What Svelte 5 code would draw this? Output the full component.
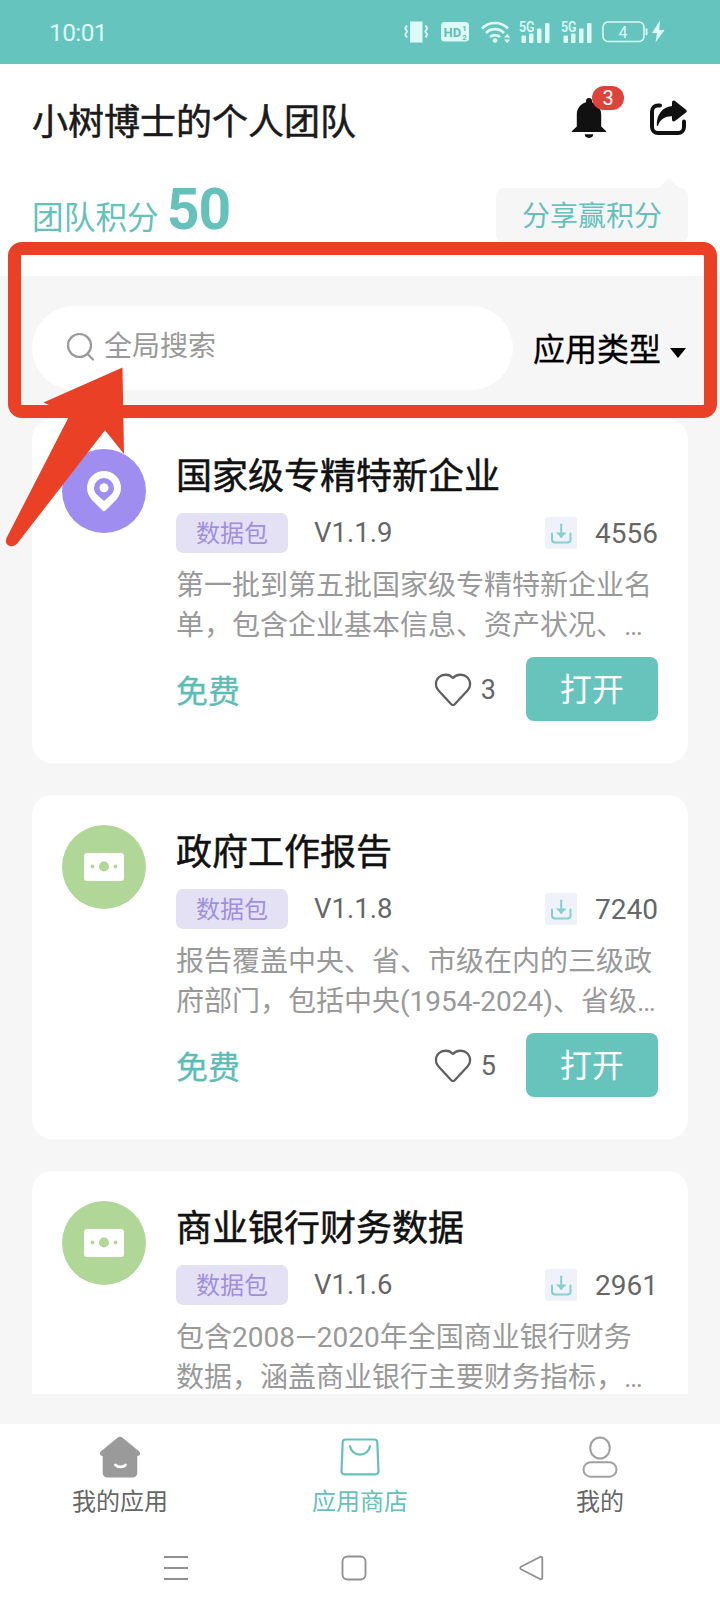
<script lang="ts">
    type App = {
        id: number;
        name: string;
        icon: 'pin' | 'cash';
        version: string;
        downloads: number;
        desc: string[];
        likes?: number;
    };

    let keyword = $state('');

    const apps: App[] = [
        {
            id: 1,
            name: '国家级专精特新企业',
            icon: 'pin',
            version: 'V1.1.9',
            downloads: 4556,
            desc: ['第一批到第五批国家级专精特新企业名', '单，包含企业基本信息、资产状况、…'],
            likes: 3
        },
        {
            id: 2,
            name: '政府工作报告',
            icon: 'cash',
            version: 'V1.1.8',
            downloads: 7240,
            desc: ['报告覆盖中央、省、市级在内的三级政', '府部门，包括中央(1954-2024)、省级…'],
            likes: 5
        },
        {
            id: 3,
            name: '商业银行财务数据',
            icon: 'cash',
            version: 'V1.1.6',
            downloads: 2961,
            desc: ['包含2008—2020年全国商业银行财务', '数据，涵盖商业银行主要财务指标，…']
        }
    ];
</script>

{#snippet signal()}
    <svg width="32" height="24" viewBox="0 0 32 24" fill="currentColor">
        <text x="0" y="11.5" font-size="14" font-weight="600" textLength="15.5" lengthAdjust="spacingAndGlyphs">5G</text>
        <rect x="2.5" y="15.5" width="4.5" height="7.5" rx="1" />
        <rect x="10" y="13.5" width="4.5" height="9.5" rx="1" />
        <rect x="18" y="8.5" width="4.5" height="14.5" rx="1" />
        <rect x="26" y="3" width="4.5" height="20" rx="1" />
    </svg>
{/snippet}

<div class="screen">
    <div class="status-bar">
        <span class="time">10:01</span>
        <div class="status-icons">
            <svg width="24" height="24" viewBox="0 0 24 24" fill="none" stroke="currentColor" stroke-width="1.8">
                <rect x="6" y="1.5" width="12.5" height="21" fill="currentColor" stroke="none" />
                <path d="M3 5.500 1.200 8.500l2 3-2 3 1.800 3M21.500 5.500l1.800 3-2 3 2 3-1.800 3" />
            </svg>
            <svg class="hd" width="28" height="20" viewBox="0 0 28 20">
                <rect width="28" height="19.500" rx="3.500" fill="currentColor" />
                <g fill="#62bdb8" font-weight="700">
                    <text x="2.500" y="14.500" font-size="13">HD</text>
                    <text x="21.200" y="9" font-size="7.500">1</text>
                    <text x="21.200" y="17.500" font-size="7.500">2</text>
                </g>
            </svg>
            <svg class="wifi" width="30" height="24" viewBox="0 0 30 24" fill="none" stroke="currentColor" stroke-width="2.600">
                <path d="M1 8.500a18 18 0 0 1 26 0M5 13a12.500 12.500 0 0 1 18 0M9 17.200a7 7 0 0 1 10 0" />
                <circle cx="14" cy="20.500" r="2.300" fill="currentColor" stroke="none" />
                <path d="M23 17.500l3.200-3.500 3.200 3.500zM23 19.500l3.200 3.500 3.200-3.500z" fill="currentColor" stroke="none" />
            </svg>
            {@render signal()}
            <span class="second-sim">{@render signal()}</span>
            <svg class="battery" width="64" height="26" viewBox="0 0 64 26">
                <rect x="1" y="3" width="41" height="19.500" rx="5" fill="none" stroke="currentColor" stroke-width="1.500" />
                <path d="M44.500 9.500v6.500" stroke="currentColor" stroke-width="2" />
                <text x="16.500" y="18.500" font-size="16" fill="currentColor">4</text>
                <path d="M58 1.500 50 14h5l-1.500 9.500L62.500 11h-5.300z" fill="currentColor" />
            </svg>
        </div>
    </div>

    <header class="header">
        <div class="title-row">
            <h1>小树博士的个人团队</h1>
            <div class="actions">
                <div class="bell">
                    <svg width="36" height="42" viewBox="0 0 36 42" fill="#111">
                        <path d="M18 0a3 3 0 0 0-3 3v1.200C9.500 5.600 5.800 10.500 5.800 16.500V28.500L1 33c-.6.600-.4 1 .4 1h33.200c.8 0 1-.4.400-1l-4.800-4.500V16.500c0-6-3.700-10.900-9.200-12.300V3a3 3 0 0 0-3-3z" />
                        <path d="M13.800 36.300h8.400a4.200 3.600 0 0 1-8.400 0z" />
                    </svg>
                    <span class="badge">3</span>
                </div>
                <svg width="38" height="36" viewBox="0 0 38 36">
                    <path d="M10 5.500H8a6 6 0 0 0-6 6V27a6 6 0 0 0 6 6h20a6 6 0 0 0 6-6v-5.500" fill="none" stroke="#111" stroke-width="4" stroke-linecap="round" />
                    <path d="M25 1 36 9.800c1 .8 1 2 0 2.800L25 21c-1.500 1-3 .2-3-1.500v-3.200c-6.500-.2-11.500 2.400-14 9.200-.4 1-1.200.8-1.200-.2C6.500 15 12 7 22 6V2.500C22 .8 23.500 0 25 1z" fill="#111" />
                </svg>
            </div>
        </div>
        <div class="points-row">
            <div class="points">
                <span>团队积分</span>
                <strong>50</strong>
            </div>
            <div class="share-tip">分享赢积分</div>
        </div>
    </header>

    <div class="search-row">
        <label class="search">
            <svg width="30" height="30" viewBox="0 0 30 30" fill="none" stroke="#999" stroke-width="2.200" stroke-linecap="round">
                <circle cx="13.500" cy="13.500" r="11.500" />
                <path d="M21.500 22l5.500 5.500" />
            </svg>
            <input type="text" placeholder="全局搜索" bind:value={keyword} />
        </label>
        <div class="filter">
            <span>应用类型</span>
            <i class="caret"></i>
        </div>
    </div>

    <main class="list">
        {#each apps as app (app.id)}
            <article class="card">
                <div class="avatar {app.icon}">
                    {#if app.icon === 'pin'}
                        <svg width="36" height="42" viewBox="0 0 36 42" fill="#fff">
                            <path fill-rule="evenodd" d="M18 1A17 17 0 0 0 1 18c0 5 2 8.500 5 12l10.600 10.600c.8.8 2 .8 2.800 0L30 30c3-3.500 5-7 5-12A17 17 0 0 0 18 1zM18 8a10 10 0 0 1 10 10c0 3-1.200 5-3 6.800L18 31l-7-6.200C9.200 23 8 21 8 18A10 10 0 0 1 18 8z" />
                            <circle cx="18" cy="17.700" r="4.500" />
                        </svg>
                    {:else}
                        <svg width="40" height="28" viewBox="0 0 40 28">
                            <rect width="40" height="28" rx="3" fill="#fff" />
                            <g fill="#b1d798">
                                <circle cx="20" cy="13.500" r="5" />
                                <circle cx="8.500" cy="13.500" r="1.900" />
                                <circle cx="31.500" cy="13.500" r="1.900" />
                            </g>
                        </svg>
                    {/if}
                </div>
                <div class="info">
                    <h2>{app.name}</h2>
                    <div class="meta">
                        <span class="tag">数据包</span>
                        <span class="version">{app.version}</span>
                        <span class="downloads">
                            <svg width="32" height="32" viewBox="0 0 32 32" fill="none" stroke="#85cfce" stroke-linecap="round">
                                <rect width="32" height="32" rx="3" fill="#eff2fa" stroke="none" />
                                <path d="M7 16.500v6a3 3 0 0 0 3 3h12.500a3 3 0 0 0 3-3v-6" stroke-width="2" />
                                <path d="M16.200 7.500V20" stroke-width="2" />
                                <path d="M11 15.500l5.200 5.500 5.200-5.500z" fill="#85cfce" stroke="none" />
                            </svg>
                            {app.downloads}
                        </span>
                    </div>
                    <p class="desc">
                        {#each app.desc as line}
                            <span>{line}</span>
                        {/each}
                    </p>
                    {#if app.likes}
                        <div class="bottom">
                            <span class="price">免费</span>
                            <span class="likes">
                                <svg width="38" height="34" viewBox="0 0 38 34" fill="none" stroke="#606060" stroke-width="2.300" stroke-linejoin="round">
                                    <path d="M19 5C15.500 1 8.500.6 4.800 4.300 1 8 1 14 4.500 17.500L17.300 31.300c1 1 2.400 1 3.400 0L33.500 17.500C37 14 37 8 33.200 4.300 29.500.6 22.500 1 19 5z" />
                                </svg>
                                {app.likes}
                            </span>
                            <button type="button">打开</button>
                        </div>
                    {/if}
                </div>
            </article>
        {/each}
    </main>

    <nav class="tab-bar">
        <div class="tab">
            <svg width="42" height="42" viewBox="0 0 42 42">
                <path d="M18.500 1.800 2 15.200c-2.200 2-.8 4.800 1.700 4.800v17a4.500 4.500 0 0 0 4.500 4.500h25.600a4.500 4.500 0 0 0 4.500-4.500V20c2.500 0 3.900-2.800 1.700-4.800L23.500 1.800a4 4 0 0 0-5 0z" fill="#9a9a9a" />
                <path d="M16.500 29c2.500 2.600 7.500 2.600 10 0" fill="none" stroke="#fff" stroke-width="2.800" stroke-linecap="round" />
            </svg>
            <span>我的应用</span>
        </div>
        <div class="tab active">
            <svg width="42" height="42" viewBox="0 0 42 42" fill="none" stroke="#66c1bd" stroke-width="2.200" stroke-linecap="round">
                <path d="M6.500 3.500h29a2.800 2.800 0 0 1 2.800 2.800L39.500 35a3 3 0 0 1-3 3.300h-31a3 3 0 0 1-3-3.300L3.700 6.300a2.800 2.800 0 0 1 2.800-2.800z" />
                <path d="M11 10c1.500 11.500 18.500 11.500 20 0" />
            </svg>
            <span>应用商店</span>
        </div>
        <div class="tab">
            <svg width="42" height="42" viewBox="0 0 42 42" fill="none" stroke="#a0a0a0" stroke-width="2">
                <ellipse cx="21" cy="12" rx="9.800" ry="10.600" />
                <rect x="4.500" y="26.200" width="33" height="14.600" rx="7.300" />
            </svg>
            <span>我的</span>
        </div>
    </nav>

    <div class="system-nav">
        <svg width="26" height="26" viewBox="0 0 26 26" stroke="#909090" stroke-width="2">
            <path d="M1 2h24M1 13h24M1 24h24" />
        </svg>
        <svg width="26" height="26" viewBox="0 0 26 26" fill="none" stroke="#909090" stroke-width="1.800">
            <rect x="1.500" y="1.500" width="23" height="23" rx="5" />
        </svg>
        <svg width="26" height="26" viewBox="0 0 26 26" fill="none" stroke="#909090" stroke-width="1.800" stroke-linejoin="round">
            <path d="M2 11.800 21 2c1.200-.6 2.300 0 2.300 1.200v19.600c0 1.200-1.100 1.800-2.300 1.200L2 14.200c-1-.6-1-1.800 0-2.400z" />
        </svg>
    </div>

    <div class="highlight"></div>
    <svg class="pointer" width="130" height="190" viewBox="0 0 130 190">
        <path d="M122.500 7.500 43.500 42.500 70 54.500 6.500 178c-3 7 6 12 11.500 4.500L105 70.300 124 94z" fill="#ea4025" />
    </svg>
</div>

<style>
    :global(body) {
        margin: 0;
    }

    .screen {
        position: relative;
        display: flex;
        flex-direction: column;
        width: 720px;
        height: 1612px;
        overflow: hidden;
        background: #f6f6f6;
        font-family: Roboto, "Noto Sans CJK SC", sans-serif;
    }

    .screen * {
        box-sizing: border-box;
    }

    svg {
        display: block;
        flex: none;
    }

    .status-bar {
        display: flex;
        flex: none;
        align-items: center;
        justify-content: space-between;
        height: 64px;
        padding: 0 54px 0 49px;
        background: #66c4bf;
        color: #dcfaf6;
    }

    .time {
        font-size: 24.5px;
        letter-spacing: -0.6px;
    }

    .status-icons {
        display: flex;
        align-items: center;
    }

    .hd {
        margin-left: 13px;
    }

    .wifi {
        margin: 0 8px 0 12px;
    }

    .second-sim {
        margin: 0 9px 0 10px;
    }

    .header {
        flex: none;
        height: 212px;
        padding: 18px 32px 0;
        background: #fff;
    }

    .title-row {
        display: flex;
        justify-content: space-between;
        height: 88px;
    }

    h1,
    h2 {
        margin: 0;
        color: #1a1a1a;
        font-size: 36px;
        font-weight: 400;
        -webkit-text-stroke: 0.5px currentColor;
    }

    h1 {
        line-height: 83px;
    }

    .actions {
        display: flex;
        gap: 43px;
        padding-top: 16px;
    }

    .actions > svg {
        margin-top: 2px;
    }

    .bell {
        position: relative;
    }

    .badge {
        position: absolute;
        top: -12px;
        left: 21px;
        width: 32px;
        height: 24px;
        border-radius: 12px;
        background: #dd433b;
        color: #fff;
        font-size: 20px;
        line-height: 24px;
        text-align: center;
    }

    .points-row {
        display: flex;
        justify-content: space-between;
    }

    .points {
        display: flex;
        align-items: baseline;
        gap: 8px;
        color: #66c1bb;
        font-size: 31.7px;
        line-height: 80px;
    }

    .points strong {
        font-size: 57px;
        letter-spacing: -1px;
    }

    .share-tip {
        position: relative;
        width: 192px;
        height: 54px;
        margin-top: 18px;
        border-radius: 8px;
        background: #f6f6f6;
        color: #66c1bb;
        font-size: 28px;
        line-height: 58px;
        text-align: center;
    }

    .share-tip::before {
        content: "";
        position: absolute;
        top: -10px;
        right: 9px;
        border: 10px solid transparent;
        border-top: 0;
        border-bottom-color: #f6f6f6;
    }

    .search-row {
        display: flex;
        flex: none;
        align-items: center;
        justify-content: space-between;
        height: 143px;
        padding: 0 34px 0 32px;
    }

    .search {
        display: flex;
        align-items: center;
        gap: 8px;
        width: 481px;
        height: 84px;
        padding-left: 34px;
        border-radius: 42px;
        background: #fff;
    }

    .search svg {
        margin-top: -1px;
    }

    .search input {
        width: 340px;
        padding: 0 0 2px;
        border: 0;
        outline: 0;
        background: none;
        font: inherit;
        font-size: 28px;
    }

    .search input::placeholder {
        color: #999;
    }

    .filter {
        display: flex;
        align-items: center;
        gap: 9px;
        padding-bottom: 2px;
        color: #000;
        font-size: 32px;
        -webkit-text-stroke: 0.3px currentColor;
    }

    .caret {
        margin-top: 12px;
        border: 8.5px solid transparent;
        border-top: 10px solid #000;
        border-bottom: 0;
    }

    .list {
        flex: none;
        height: 975px;
        padding: 0 32px;
        overflow: hidden;
    }

    .card {
        display: flex;
        gap: 30px;
        height: 344px;
        margin-bottom: 32px;
        padding: 30px;
        border-radius: 20px;
        background: #fff;
    }

    .avatar {
        display: flex;
        flex: none;
        align-items: center;
        justify-content: center;
        width: 84px;
        height: 84px;
        border-radius: 50%;
        background: #b1d798;
    }

    .avatar.pin {
        background: #a08df0;
    }

    .info {
        flex: 1;
        min-width: 0;
    }

    h2 {
        height: 64px;
        color: #111;
        line-height: 56px;
    }

    .meta {
        display: flex;
        align-items: center;
        height: 40px;
        color: #666;
        font-size: 28px;
    }

    .version {
        padding-bottom: 2px;
        font-size: 27.5px;
    }

    .tag {
        width: 112px;
        height: 40px;
        margin-right: 26px;
        border-radius: 7px;
        background: #e5e1f5;
        color: #a08fe0;
        font-size: 24px;
        line-height: 42px;
        text-align: center;
    }

    .downloads {
        display: flex;
        align-items: center;
        gap: 18px;
        margin-left: auto;
    }

    .desc {
        margin: 13px 0 0;
        color: #999;
        font-size: 28px;
        line-height: 40px;
    }

    .desc span {
        display: block;
        white-space: nowrap;
    }

    .bottom {
        display: flex;
        align-items: center;
        height: 64px;
        margin-top: 11px;
    }

    .price {
        color: #5cbdb6;
        font-size: 32px;
        -webkit-text-stroke: 0.3px currentColor;
    }

    .likes {
        display: flex;
        align-items: center;
        gap: 9px;
        margin: 0 30px 0 auto;
        padding-top: 2px;
        color: #666;
        font-size: 27px;
    }

    button {
        width: 132px;
        height: 64px;
        padding: 2px 0 0;
        border: 0;
        border-radius: 8px;
        background: #66c4bd;
        color: #fff;
        font: inherit;
        font-size: 32px;
        line-height: 62px;
    }

    .tab-bar {
        display: grid;
        flex: none;
        grid-template-columns: repeat(3, 1fr);
        height: 106px;
        margin-top: 30px;
        padding-top: 12px;
        background: #fff;
    }

    .tab {
        display: flex;
        flex-direction: column;
        align-items: center;
        gap: 7px;
        color: #666;
        font-size: 24px;
        line-height: 34px;
    }

    .tab.active {
        color: #66c1bb;
    }

    .system-nav {
        display: flex;
        flex: 1;
        align-items: center;
        gap: 152px;
        padding: 0 0 6px 163px;
        background: #fff;
    }

    /* marker frame and arrow drawn over the search area */
    .highlight {
        position: absolute;
        top: 242px;
        left: 8px;
        width: 709px;
        height: 176px;
        border: 13px solid #ea4025;
        border-radius: 14px;
    }

    .pointer {
        position: absolute;
        top: 360px;
        left: 0;
    }
</style>
